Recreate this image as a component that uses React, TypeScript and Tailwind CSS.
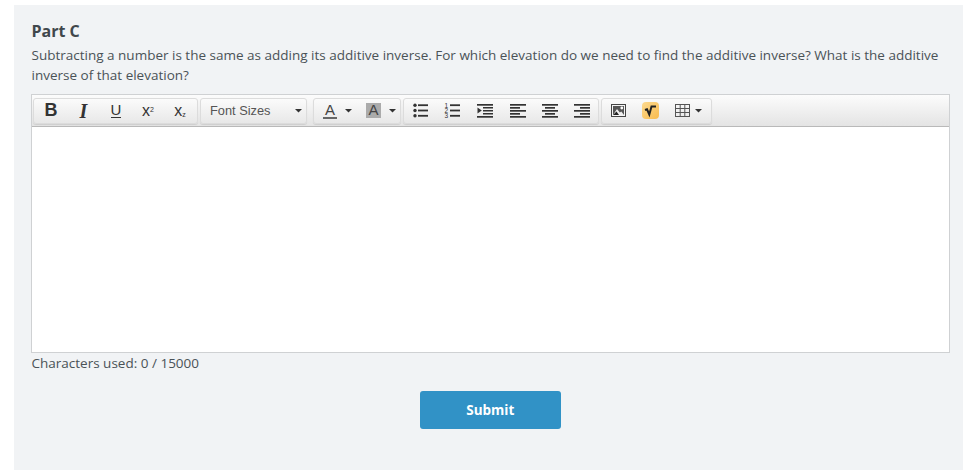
function Caret({ className = 'ml-[8px]' }: { className?: string }) {
  return (
    <svg className={`shrink-0 ${className}`} width="7" height="4" viewBox="0 0 7 4" fill="#333">
      <path d="M0 0 H7 L3.5 3.5 Z" />
    </svg>
  );
}

function Btn({ w, children }: { w: string; children: React.ReactNode }) {
  return <div className={`flex h-full items-center justify-center ${w}`}>{children}</div>;
}

function Group({ className, children }: { className: string; children: React.ReactNode }) {
  return (
    <div className={`flex h-[26px] items-center rounded-[3px] border border-[#dcdcdc] bg-gradient-to-b from-[#fbfbfb] to-[#e8e8e8] shadow-[0_1px_1px_rgba(0,0,0,0.1)] ${className}`}>
      {children}
    </div>
  );
}

function Lines({ rows }: { rows: [number, number][] }) {
  return (
    <svg width="16" height="15" viewBox="0 0 16 15" fill="#333">
      {rows.map(([x, w], i) => (
        <rect key={i} x={x} y={i * 3 + 1} width={w} height="1.7" />
      ))}
    </svg>
  );
}

const BulletList = () => (
  <svg width="15" height="15" viewBox="0 0 15 15" fill="#333">
    <circle cx="2" cy="2.2" r="1.7" />
    <circle cx="2" cy="7.5" r="1.7" />
    <circle cx="2" cy="12.8" r="1.7" />
    <rect x="5" y="1.3" width="10" height="1.8" />
    <rect x="5" y="6.6" width="10" height="1.8" />
    <rect x="5" y="11.9" width="10" height="1.8" />
  </svg>
);

const NumberList = () => (
  <div className="relative h-[15px] w-[15px]">
    <div className="absolute left-0 top-[-0.5px] flex flex-col font-['Liberation_Sans',sans-serif] text-[6.5px] leading-[5.4px] text-[#333]">
      <span>1</span>
      <span>2</span>
      <span>3</span>
    </div>
    <svg className="absolute left-0 top-0" width="15" height="15" viewBox="0 0 15 15" fill="#333">
      <rect x="5" y="1.3" width="10" height="1.8" />
      <rect x="5" y="6.6" width="10" height="1.8" />
      <rect x="5" y="11.9" width="10" height="1.8" />
    </svg>
  </div>
);

const Indent = () => (
  <svg width="16" height="15" viewBox="0 0 16 15" fill="#333">
    <rect x="0" y="1" width="16" height="1.7" />
    <rect x="6" y="4" width="10" height="1.5" />
    <rect x="6" y="7" width="10" height="1.5" />
    <rect x="6" y="10" width="10" height="1.5" />
    <rect x="0" y="13" width="16" height="1.7" />
    <path d="M0.5 4.5 L4.8 7.5 L0.5 10.5 Z" />
  </svg>
);

const ImageIcon = () => (
  <svg width="15" height="13" viewBox="0 0 15 13">
    <rect x="0.5" y="0.5" width="14" height="12" fill="#f4f4f4" stroke="#444" />
    <path d="M2 2 H13 V11 H2 Z" fill="#555" />
    <circle cx="10.8" cy="4" r="1.4" fill="#fff" />
    <path d="M2 11 L6 5 L8.8 8.6 L10.3 7.4 L13 11 Z" fill="#f0f0f0" />
    <path d="M2 11 L5.5 7.5 L8 11 Z" fill="#222" />
  </svg>
);

const MathIcon = () => (
  <svg width="17" height="17" viewBox="0 0 17 17">
    <defs>
      <linearGradient id="mathFill" x1="0" y1="0" x2="1" y2="1">
        <stop offset="0" stopColor="#fcd98f" />
        <stop offset="1" stopColor="#f9bb4d" />
      </linearGradient>
    </defs>
    <rect x="0" y="0" width="17" height="17" rx="4" fill="url(#mathFill)" />
    <path d="M3 8 L5 7.3 L7.3 12.5 L9.5 4.6 H14" fill="none" stroke="#222" strokeWidth="2" />
  </svg>
);

const TableIcon = () => (
  <svg width="15" height="13" viewBox="0 0 15 13" fill="none" stroke="#555">
    <rect x="0.5" y="0.5" width="14" height="12" />
    <path d="M5.2 0.5 V12.5 M9.8 0.5 V12.5 M0.5 4.5 H14.5 M0.5 8.5 H14.5" />
  </svg>
);

export default function App() {
  return (
    <div className="h-[470px] w-[963px] overflow-hidden bg-white pl-[14px] pt-[5px] font-['Open_Sans',sans-serif]">
      <div className="h-[465px] bg-[#f1f3f5] pl-[17.5px] pr-[13px] pt-[15px]">
        <h2 className="text-[16px] font-bold leading-[22px] text-[#40474c]">Part C</h2>
        <p className="mt-[3px] text-[13.5px] leading-[20px] text-[#4a5257]">
          Subtracting a number is the same as adding its additive inverse. For which elevation do we need to find the additive inverse? What is the additive inverse of that elevation?
        </p>
        <div className="-ml-[0.5px] mt-[9px] border border-[#cfd1d3] bg-white">
          <div className="flex h-[32px] items-center border-b border-[#b9b9b9] bg-gradient-to-b from-[#fcfcfc] to-[#e4e4e4] pl-[1px]">
            <Group className="w-[165px] pl-[1px] font-['Liberation_Sans',sans-serif] text-[#333]">
              <Btn w="w-[32px]"><span className="text-[18px] font-bold">B</span></Btn>
              <Btn w="w-[33px]"><span className="font-['Liberation_Serif',serif] text-[20px] font-bold italic">I</span></Btn>
              <Btn w="w-[32px]"><span className="border-b border-[#333] text-[15px] leading-[14px]">U</span></Btn>
              <Btn w="w-[32px]"><span className="text-[16px]">x<sup className="text-[7px]">2</sup></span></Btn>
              <Btn w="w-[32px]"><span className="text-[16px]">x<sub className="text-[7px]">z</sub></span></Btn>
            </Group>
            <Group className="ml-[2px] w-[107px] justify-between pl-[9px] pr-[4px] font-['Liberation_Sans',sans-serif] text-[12.8px] text-[#555]">
              <span>Font Sizes</span>
              <Caret />
            </Group>
            <Group className="ml-[6px] w-[88px] pl-[9px] font-['Liberation_Sans',sans-serif] text-[15px] text-[#444]">
              <span className="border-b-2 border-[#666] px-[2px] leading-[14px]">A</span>
              <Caret />
              <span className="ml-[14px] flex h-[15px] w-[15px] items-center justify-center bg-[#ababab]">A</span>
              <Caret />
            </Group>
            <Group className="ml-[2px] w-[196px]">
              <Btn w="w-[32px]"><BulletList /></Btn>
              <Btn w="w-[32px]"><NumberList /></Btn>
              <Btn w="w-[33px]"><Indent /></Btn>
              <Btn w="w-[33px]"><Lines rows={[[0, 16], [0, 10], [0, 16], [0, 10], [0, 16]]} /></Btn>
              <Btn w="w-[32px]"><Lines rows={[[0, 16], [3, 10], [0, 16], [3, 10], [0, 16]]} /></Btn>
              <Btn w="w-[32px]"><Lines rows={[[0, 16], [6, 10], [0, 16], [6, 10], [0, 16]]} /></Btn>
            </Group>
            <Group className="ml-[2px] w-[111px]">
              <Btn w="w-[33px]"><ImageIcon /></Btn>
              <Btn w="w-[33px]"><MathIcon /></Btn>
              <Btn w="w-[45px]"><TableIcon /><Caret className="ml-[5px]" /></Btn>
            </Group>
          </div>
          <div className="h-[225px] bg-white" />
        </div>
        <p className="mt-0 text-[13.5px] leading-[20px] text-[#4a5257]">Characters used: 0 / 15000</p>
        <div className="mt-[18px] flex justify-center pr-[1px]">
          <button className="h-[38px] w-[141px] rounded-[3px] bg-[#3192c6] text-[13.5px] font-bold text-white">Submit</button>
        </div>
      </div>
    </div>
  );
}
